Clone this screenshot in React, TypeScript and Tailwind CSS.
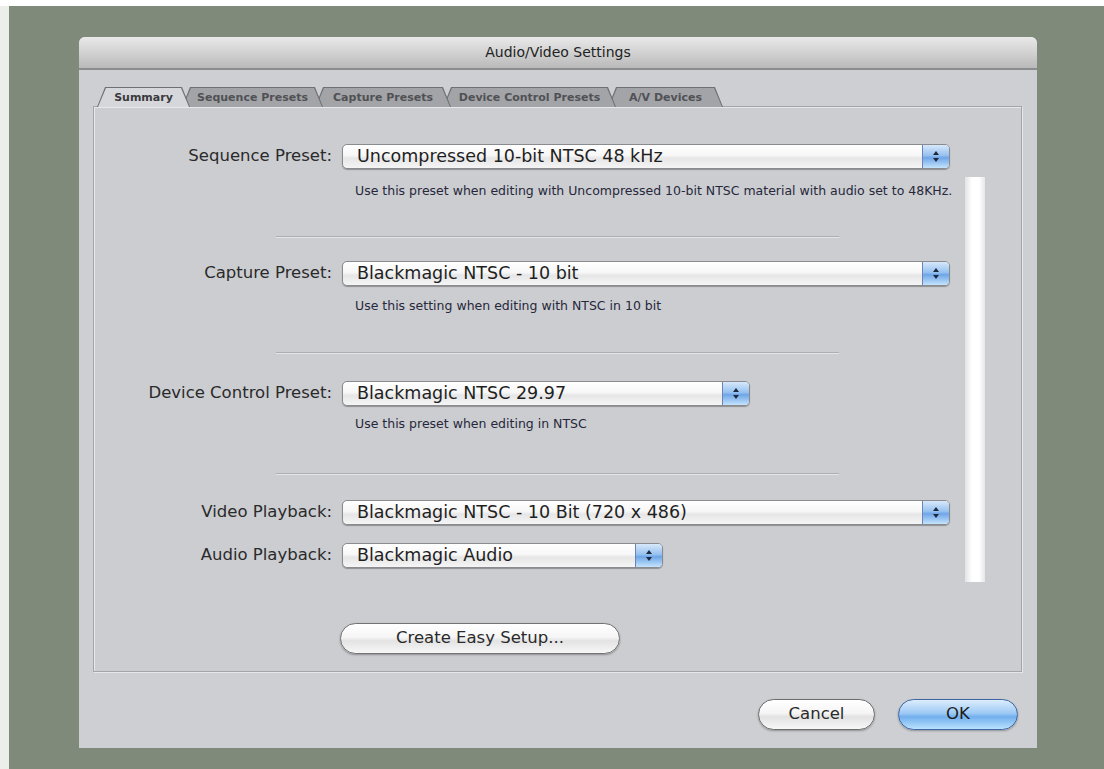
import React from "react";

const tabs = [
  { label: "Summary", w: "w-[93px]", z: "z-[6]", active: true },
  { label: "Sequence Presets", w: "w-[141px]", z: "z-[5]", active: false },
  { label: "Capture Presets", w: "w-[136px]", z: "z-[4]", active: false },
  { label: "Device Control Presets", w: "w-[173px]", z: "z-[3]", active: false },
  { label: "A/V Devices", w: "w-[115px]", z: "z-[2]", active: false },
];

// tiny up/down arrows used in the pop-up stepper
const StepperArrows = () => (
  <svg width="8" height="13" viewBox="0 0 8 13">
    <polygon points="4,1 7,5 1,5" fill="#1d2a3e" />
    <polygon points="1,8 7,8 4,12" fill="#1d2a3e" />
  </svg>
);

const PopUp = ({ value, width }: { value: string; width: string }) => (
  <div
    className={`flex h-[25px] ${width} overflow-hidden rounded-[5px] border border-[#8a8b8f] bg-[linear-gradient(to_bottom,#ffffff_0%,#f7f7f7_45%,#e6e6e6_58%,#f5f5f5_100%)] shadow-[0_1px_1px_rgba(0,0,0,0.3)]`}
  >
    <span className="flex-1 truncate pl-[14px] text-[17.5px] leading-[23px] text-[#1f1f1f]">{value}</span>
    <span className="flex w-[27px] items-center justify-center border-l border-[#6b84b6] bg-[linear-gradient(to_bottom,#d7e8fb_0%,#97c2f0_45%,#6fa6e7_55%,#c4e3fd_100%)]">
      <StepperArrows />
    </span>
  </div>
);

const Row = ({ label, children }: { label: string; children: React.ReactNode }) => (
  <div className="flex items-center">
    <span className="w-[248px] pr-[10px] text-right text-[16.5px] text-[#2a2a2a]">{label}</span>
    {children}
  </div>
);

const Note = ({ text, mt }: { text: string; mt: string }) => (
  <p className={`${mt} ml-[261px] text-[12.5px] leading-[14px] text-[#26283a]`}>{text}</p>
);

const Divider = ({ mt }: { mt: string }) => (
  <div className={`${mt} ml-[182px] w-[563px] border-t border-b border-t-[#adaeb1] border-b-[#e4e5e8]`} />
);

export default function App() {
  return (
    <div className="flex h-[769px] flex-col bg-white [font-family:'Lucida_Grande','DejaVu_Sans',sans-serif]">
      <div className="h-[6px] shrink-0 bg-white" />
      <div className="flex flex-1">
        <div className="w-[9px] bg-[#eceeea]" />
        <div className="flex-1 bg-[#7f8a7b] pl-[70px] pt-[31px]">
          {/* dialog window */}
          <div className="flex h-[711px] w-[958px] flex-col rounded-t-[6px] bg-[#cecfd3]">
            <div className="flex h-[33px] shrink-0 items-center justify-center rounded-t-[6px] border-b-2 border-[#8b8c8e] bg-[linear-gradient(to_bottom,#e9e9e9_0%,#d2d2d2_50%,#b9b9b9_100%)]">
              <span className="text-[14px] text-[#222]">Audio/Video Settings</span>
            </div>

            <div className="flex flex-1 flex-col pt-[17px]">
              {/* tab strip */}
              <div className="ml-[18px] flex h-[20px]">
                {tabs.map((t, i) => (
                  <div
                    key={t.label}
                    className={`relative ${t.z} ${t.w} ${i > 0 ? "-ml-[8px]" : ""} bg-[#6f7073] px-[1px] pt-[1px] [clip-path:polygon(8px_0,calc(100%_-_8px)_0,100%_100%,0_100%)]`}
                  >
                    <div
                      className={`flex h-full items-center justify-center pt-[1px] text-[11px] font-bold [clip-path:polygon(8px_0,calc(100%_-_8px)_0,100%_100%,0_100%)] ${
                        t.active ? "bg-[#d6d7da] text-[#3a3a3d]" : "bg-[#a3a4a7] text-[#505155]"
                      }`}
                    >
                      {t.label}
                    </div>
                  </div>
                ))}
              </div>

              {/* settings panel */}
              <div className="-mt-[1px] ml-[14px] flex h-[566px] w-[929px] border border-[#a4a5a8] bg-[#cccdd1] shadow-[inset_1px_1px_0_#e7e8ea,1px_1px_0_#e5e6e8]">
                <div className="w-[871px] pt-[37px]">
                  <Row label="Sequence Preset:">
                    <PopUp value="Uncompressed 10-bit NTSC 48 kHz" width="w-[608px]" />
                  </Row>
                  <Note
                    mt="mt-[15px]"
                    text="Use this preset when editing with Uncompressed 10-bit NTSC material with audio set to 48KHz."
                  />
                  <Divider mt="mt-[38px]" />

                  <div className="mt-[23px]">
                    <Row label="Capture Preset:">
                      <PopUp value="Blackmagic NTSC - 10 bit" width="w-[608px]" />
                    </Row>
                  </div>
                  <Note mt="mt-[13px]" text="Use this setting when editing with NTSC in 10 bit" />
                  <Divider mt="mt-[39px]" />

                  <div className="mt-[27px]">
                    <Row label="Device Control Preset:">
                      <PopUp value="Blackmagic NTSC 29.97" width="w-[408px]" />
                    </Row>
                  </div>
                  <Note mt="mt-[11px]" text="Use this preset when editing in NTSC" />
                  <Divider mt="mt-[42px]" />

                  <div className="mt-[25px]">
                    <Row label="Video Playback:">
                      <PopUp value="Blackmagic NTSC - 10 Bit (720 x 486)" width="w-[608px]" />
                    </Row>
                  </div>
                  <div className="mt-[18px]">
                    <Row label="Audio Playback:">
                      <PopUp value="Blackmagic Audio" width="w-[321px]" />
                    </Row>
                  </div>

                  <button className="ml-[246px] mt-[55px] h-[31px] w-[280px] rounded-full border border-[#737373] bg-[linear-gradient(to_bottom,#ffffff_0%,#f6f6f6_45%,#e3e3e3_58%,#f7f7f7_100%)] text-[16.5px] text-[#2a2a2a] shadow-[0_1px_2px_rgba(0,0,0,0.3)]">
                    Create Easy Setup...
                  </button>
                </div>

                {/* scroll track */}
                <div className="mt-[70px] h-[405px] w-[20px] bg-[linear-gradient(to_right,#e2e3e5_0%,#ffffff_35%,#ffffff_70%,#e6e7e9_100%)]" />
              </div>

              {/* dialog buttons */}
              <div className="mt-[27px] flex justify-end gap-[23px] pr-[19px]">
                <button className="h-[31px] w-[117px] rounded-full border border-[#6d6d6d] bg-[linear-gradient(to_bottom,#ffffff_0%,#f5f5f5_45%,#e2e2e2_58%,#f8f8f8_100%)] text-[16.5px] text-[#2a2a2a] shadow-[0_1px_2px_rgba(0,0,0,0.3)]">
                  Cancel
                </button>
                <button className="h-[31px] w-[120px] rounded-full border border-[#4066a4] bg-[linear-gradient(to_bottom,#dcedfd_0%,#9fcaf4_45%,#72afee_58%,#b9e2fd_100%)] text-[16.5px] text-[#1c1c1c] shadow-[0_1px_2px_rgba(0,0,0,0.3)]">
                  OK
                </button>
              </div>
            </div>
          </div>
        </div>
      </div>
    </div>
  );
}
